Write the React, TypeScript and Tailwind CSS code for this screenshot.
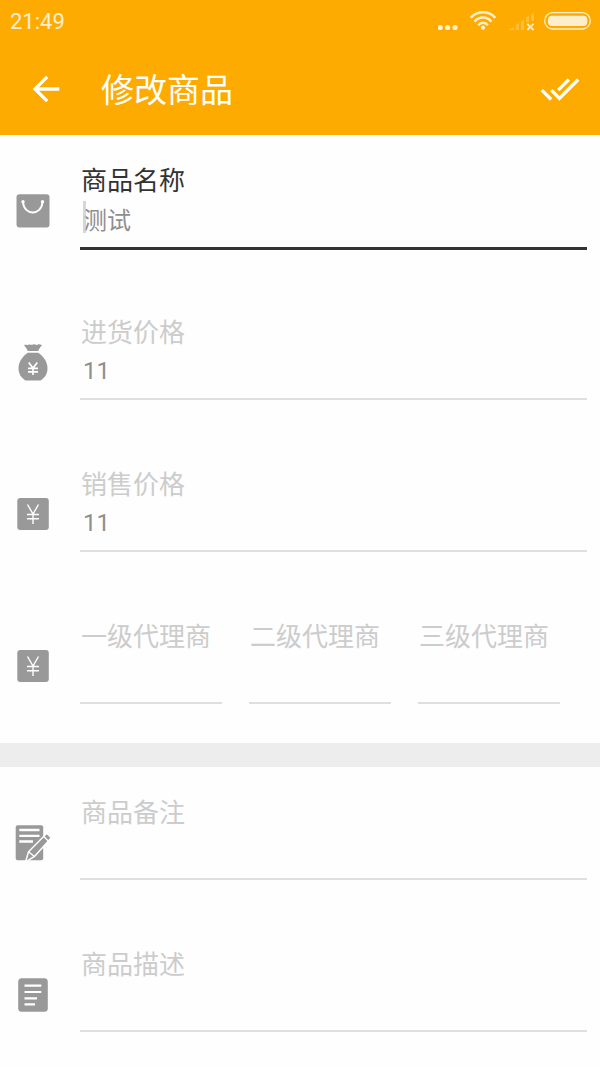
import { useState } from "react";
import type { ReactNode } from "react";
import { MdArrowBack, MdDoneAll } from "react-icons/md";

function StatusBar() {
  return (
    <div className="flex h-[43px] items-center justify-between pl-[10px] pr-[9px] text-white/80">
      <span className="text-[22px] leading-6">21:49</span>
      <div className="flex items-center gap-[10px]">
        <svg width="22" height="21" viewBox="0 0 22 21" fill="currentColor">
          <circle cx="2.2" cy="16.5" r="2.6" />
          <circle cx="9.6" cy="16.5" r="2.6" />
          <circle cx="17" cy="16.5" r="2.6" />
        </svg>
        <svg width="28" height="21" viewBox="0 0 28 21" fill="none" stroke="currentColor" strokeWidth="2.5">
          <path d="M.8 6.8A16.4 16.4 0 0 1 25.2 6.8" />
          <path d="M4.6 10.7A10.6 10.6 0 0 1 21.4 10.7" />
          <path d="M8.3 14.2A5.8 5.8 0 0 1 17.7 14.2" />
          <circle cx="13" cy="16.7" r="2.1" fill="currentColor" stroke="none" />
        </svg>
        <svg width="26" height="21" viewBox="0 0 26 21">
          <path
            d="M0 19l6-3v3zM8 14l3-2v7H8zM13 10.500l3-2V19h-3zM18 6.500l3-2V11h-3zM23 3.500l3-2V10h-3z"
            fill="currentColor"
            opacity=".3"
          />
          <path d="M19.300 12.800l6.200 6.200M25.500 12.800l-6.200 6.200" stroke="currentColor" strokeWidth="1.800" />
        </svg>
        <svg width="47" height="21" viewBox="0 0 47 21">
          <rect x=".7" y="1.700" width="45.600" height="16.300" rx="8" fill="none" stroke="currentColor" strokeWidth="1.300" />
          <rect x="4" y="4.800" width="39.300" height="10.300" rx="4" fill="currentColor" />
        </svg>
      </div>
    </div>
  );
}

function BagIcon() {
  return (
    <svg width="34" height="34" viewBox="0 0 34 34">
      <rect x=".5" y=".2" width="33" height="33.300" rx="3" fill="#999" />
      <path d="M7 8C8 22 25.500 22 26.500 8" fill="none" stroke="#fff" strokeWidth="1.900" />
      <circle cx="7" cy="7.800" r="1.700" fill="#fff" />
      <circle cx="26.500" cy="7.800" r="1.700" fill="#fff" />
    </svg>
  );
}

function MoneyBagIcon() {
  return (
    <svg width="30" height="38" viewBox="0 0 30 38">
      <path
        d="M6 1.200C8 .3 9 1.500 10.500 .7S13.500 1.300 15 .5S18 1.500 19.500 .7S22 .3 24 1.200C22.500 3 21 4.500 20.300 7H9.700C9 4.500 7.500 3 6 1.200z"
        fill="#999"
      />
      <path
        d="M9.700 8.800H20.300C25.500 12.500 29.500 18 29.500 24.500C29.500 30 26.500 34 22.500 36.500H7.500C3.500 34 .5 30 .5 24.500C.5 18 4.500 12.500 9.700 8.800z"
        fill="#999"
      />
      <path d="M10.700 18.500L15 24L19.300 18.500M15 23.500V31M10 24.300H20M10 27.800H20" fill="none" stroke="#fff" strokeWidth="1.700" />
    </svg>
  );
}

function YenIcon() {
  return (
    <svg width="32" height="34" viewBox="0 0 32 34">
      <rect x=".3" width="31.500" height="32" rx="3" fill="#999" />
      <path d="M10.500 6.500L16 16L21.500 6.500M16 15.500V26M10 16.500H22M10 20.700H22" fill="none" stroke="#fff" strokeWidth="1.400" />
    </svg>
  );
}

function NoteIcon() {
  return (
    <svg width="36" height="36" viewBox="0 0 36 36">
      <rect x=".7" y=".3" width="27.500" height="35" rx="2" fill="#999" />
      <path d="M4.300 5H24.500M4.300 10.800H24.500M4.300 16.500H18" stroke="#fff" strokeWidth="2.300" />
      <path d="M31.800 8.300L36.300 12.800L19.500 31.500L10.500 37L13.500 26.800z" fill="#999" stroke="#fff" strokeWidth="1.500" />
      <path d="M13.800 27L19.500 31.500M28.800 11.500L33.300 16" stroke="#fff" strokeWidth="1.300" />
    </svg>
  );
}

function DescriptionIcon() {
  return (
    <svg width="30" height="34" viewBox="0 0 30 34">
      <rect x=".2" y=".3" width="29.600" height="33.400" rx="3.500" fill="#999" />
      <path d="M6.500 7.600H23.300M6.500 14H23.300M6.500 20.300H19M6.500 26.400H17" stroke="#fff" strokeWidth="2.200" />
    </svg>
  );
}

type FieldProps = {
  id: string;
  label: string;
  initial?: string;
  active?: boolean;
  numeric?: boolean;
};

function Field({ id, label, initial = "", active = false, numeric = false }: FieldProps) {
  const [value, setValue] = useState(initial);

  return (
    <div className="relative min-w-0 flex-1">
      <label
        htmlFor={id}
        className={`block h-8 whitespace-nowrap pl-px text-[26px] leading-9 ${active ? "text-[#333]" : "text-[#ccc]"}`}
      >
        {label}
      </label>
      <input
        id={id}
        type="text"
        inputMode={numeric ? "decimal" : "text"}
        value={value}
        onChange={(e) => setValue(e.target.value)}
        className={`block w-full bg-transparent pl-[3px] text-2xl text-[#8f8f8f] outline-none ${
          active ? "h-[55px] border-b-3 border-[#333] pb-1.5" : "h-[53px] border-b-2 border-[#dfdfdf] pb-1"
        }`}
      />
      {/* Text cursor */}
      {active && <span className="absolute left-[3px] top-[38px] h-8 w-[3px] bg-[#ccc]/80" />}
    </div>
  );
}

function Row({ icon, children }: { icon: ReactNode; children: ReactNode }) {
  return (
    <div className="flex h-[152px] items-center pr-[13px]">
      <div className="mr-[14px] flex w-[66px] shrink-0 justify-center">{icon}</div>
      <div className="min-w-0 flex-1 self-start pt-7">{children}</div>
    </div>
  );
}

export default function App() {
  return (
    <div className="flex h-screen flex-col bg-[#fefefe] font-['Roboto','Noto_Sans_CJK_SC',sans-serif]">
      <header className="shrink-0 bg-[#fdab00] text-white">
        <StatusBar />
        <div className="flex h-[92px] items-center pl-[26px] pr-5">
          <button type="button" aria-label="返回">
            <MdArrowBack className="size-10" />
          </button>
          <h1 className="ml-[35px] flex-1 pt-1 text-[33px] leading-10">修改商品</h1>
          <button type="button" aria-label="完成">
            <MdDoneAll className="size-10" />
          </button>
        </div>
      </header>

      <main className="min-h-0 flex-1 overflow-y-auto [scrollbar-width:none]">
        <Row icon={<BagIcon />}>
          <Field id="name" label="商品名称" initial="测试" active />
        </Row>
        <Row icon={<MoneyBagIcon />}>
          <Field id="cost" label="进货价格" initial="11" numeric />
        </Row>
        <Row icon={<YenIcon />}>
          <Field id="price" label="销售价格" initial="11" numeric />
        </Row>
        <Row icon={<YenIcon />}>
          {/* Agent price levels */}
          <div className="flex gap-[27px] pr-[27px]">
            <Field id="agent1" label="一级代理商" numeric />
            <Field id="agent2" label="二级代理商" numeric />
            <Field id="agent3" label="三级代理商" numeric />
          </div>
        </Row>

        <div className="h-6 bg-[#ededed]" />

        <Row icon={<NoteIcon />}>
          <Field id="remark" label="商品备注" />
        </Row>
        <Row icon={<DescriptionIcon />}>
          <Field id="description" label="商品描述" />
        </Row>
      </main>
    </div>
  );
}
